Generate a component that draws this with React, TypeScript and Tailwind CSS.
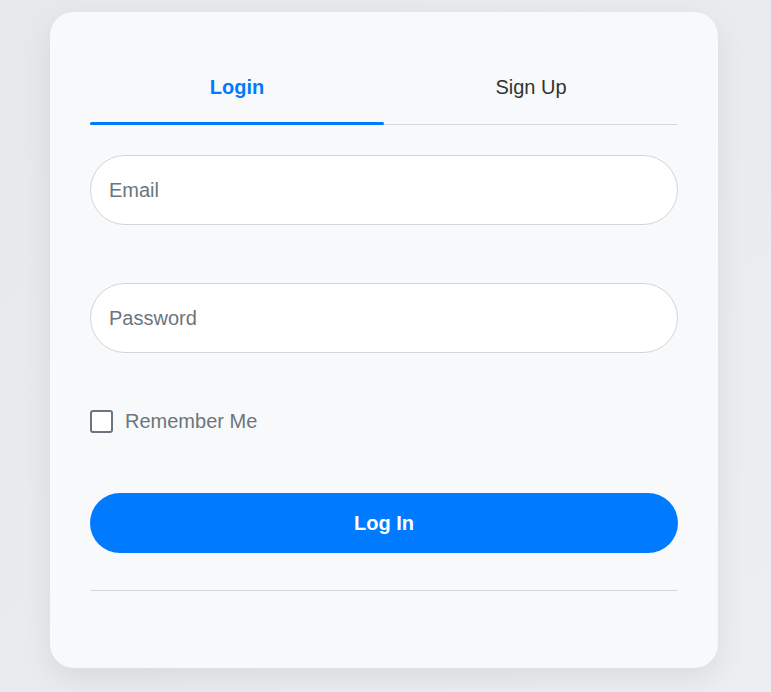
import { useState } from 'react';

export default function App() {
  const [tab, setTab] = useState<'login' | 'signup'>('login');
  const [remember, setRemember] = useState(false);

  return (
    <div className="min-h-screen w-full bg-gradient-to-br from-[#e6e8ec] to-[#eceef1] pt-3 pl-[50px] font-['Liberation_Sans',Arial,sans-serif]">
      <div className="w-[668px] h-[656px] rounded-[24px] bg-[#f8f9fb] px-10 pt-10 shadow-[0_10px_30px_rgba(0,0,0,0.08)]">
        <div className="flex border-b border-[#d5d8de]">
          {(['login', 'signup'] as const).map((t) => (
            <button
              key={t}
              onClick={() => setTab(t)}
              className={`relative flex-1 pt-[21px] pb-[23px] text-xl leading-7 ${
                tab === t ? 'font-bold text-[#007bff]' : 'text-[#333]'
              }`}
            >
              {t === 'login' ? 'Login' : 'Sign Up'}
              {tab === t && (
                <span className="absolute left-0 right-0 -bottom-px h-[3px] rounded-full bg-[#007bff]" />
              )}
            </button>
          ))}
        </div>

        <input
          type="email"
          placeholder="Email"
          className="mt-[30px] block w-full h-[70px] rounded-full border border-[#d1d5db] bg-white pl-[18px] text-xl text-[#333] placeholder:text-[#6c757d] outline-none"
        />
        <input
          type="password"
          placeholder="Password"
          className="mt-[58px] block w-full h-[70px] rounded-full border border-[#d1d5db] bg-white pl-[18px] text-xl text-[#333] placeholder:text-[#6c757d] outline-none"
        />

        <label className="mt-[54px] flex items-center gap-3 cursor-pointer">
          <input
            type="checkbox"
            checked={remember}
            onChange={(e) => setRemember(e.target.checked)}
            className="appearance-none w-[23px] h-[23px] rounded-[3px] border-2 border-[#6c757d] bg-white checked:bg-[#007bff] checked:border-[#007bff]"
          />
          <span className="text-xl leading-7 text-[#6c757d]">Remember Me</span>
        </label>

        <button className="mt-[58px] w-full h-[60px] rounded-full bg-[#007bff] text-xl font-bold text-white">
          Log In
        </button>

        <div className="mt-[37px] h-px bg-[#d5d8de]" />
      </div>
    </div>
  );
}
